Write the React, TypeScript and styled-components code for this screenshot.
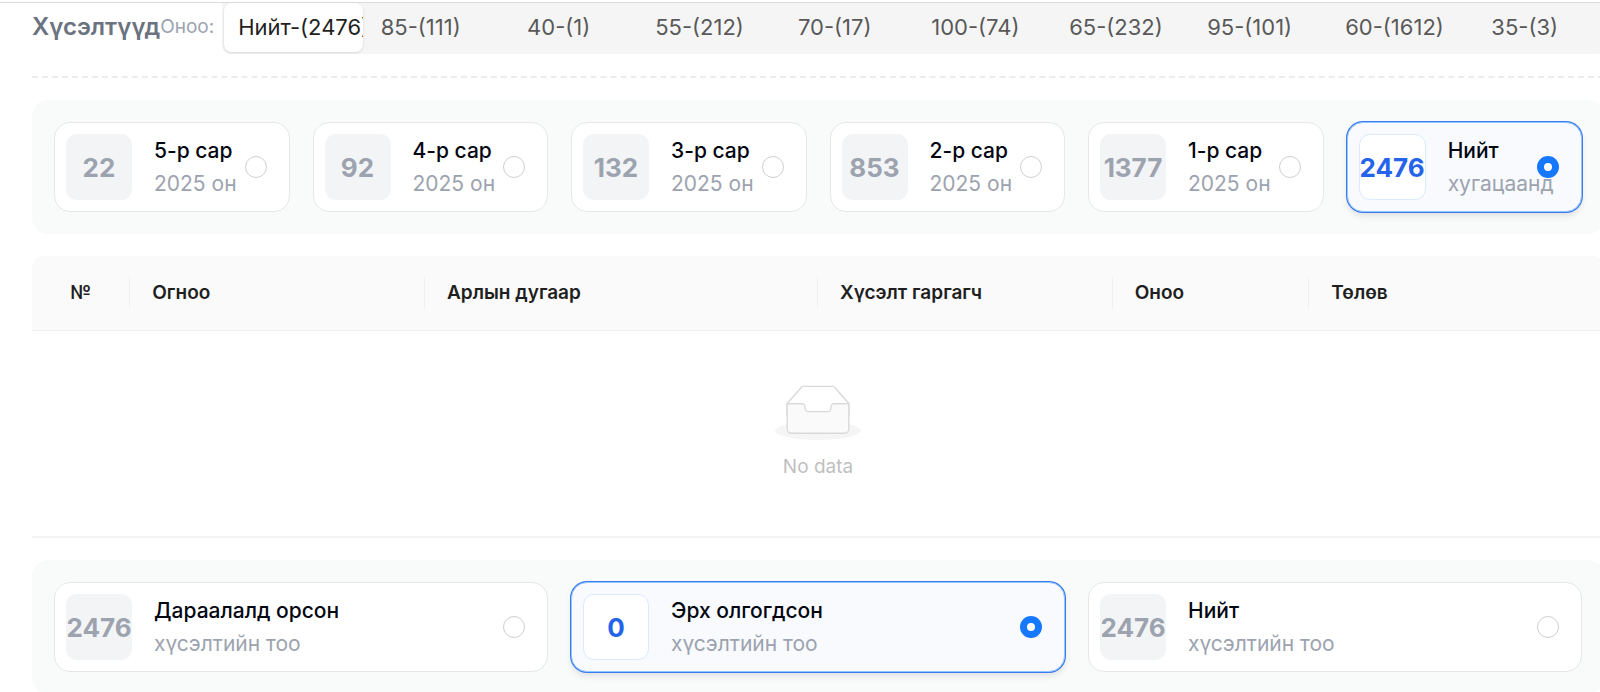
import React, { useState } from "react";
import styled, { createGlobalStyle, css } from "styled-components";

const GlobalStyle = createGlobalStyle`
  *, *::before, *::after { box-sizing: border-box; }
  body {
    margin: 0;
    background: #fff;
    overflow: hidden;
    font-family: Inter, "Liberation Sans", sans-serif;
    -webkit-font-smoothing: antialiased;
  }
`;

const Page = styled.main`
  border-top: 2px solid #fff;
`;

const Content = styled.div`
  border-top: 1px solid #d9dadc;
  padding-left: 32px;
  overflow: hidden;
`;

const Sheet = styled.div`
  display: flex;
  flex-direction: column;
  gap: 22px;
  margin-right: -4px;
`;

const Toolbar = styled.header`
  display: flex;
  align-items: flex-start;
  padding-bottom: 22px;
  border-bottom: 2px dashed #ececec;
`;

const Heading = styled.h1`
  margin: 0;
  font-size: 24px;
  line-height: 48px;
  font-weight: 600;
  color: #6b7280;
`;

const FilterLabel = styled.span`
  font-size: 19px;
  line-height: 48px;
  color: #9ca3af;
  white-space: nowrap;
`;

const Segmented = styled.div`
  flex: 1;
  min-width: 0;
  display: flex;
  height: 51px;
  margin-left: 8px;
  padding: 0 0 2px 2px;
  background: #f5f5f5;
  border-radius: 0 0 8px 8px;
  overflow: hidden;
`;

const Segment = styled.label<{ $active: boolean }>`
  flex: none;
  width: 115px;
  margin-right: 23px;
  padding: 0 16px;
  overflow: hidden;
  white-space: nowrap;
  text-align: center;
  font-size: 22px;
  line-height: 48px;
  color: #595959;
  cursor: pointer;
  ${(p) =>
    p.$active &&
    css`
      width: 139px;
      margin-right: 0;
      padding: 0 14px;
      color: #1f1f1f;
      background: #fff;
      border-radius: 8px;
      box-shadow: 0 1px 3px rgba(0, 0, 0, 0.12);
    `}
`;

const HiddenRadio = styled.input`
  position: absolute;
  opacity: 0;
  pointer-events: none;
`;

const Panel = styled.section<{ $columns: number }>`
  display: grid;
  grid-template-columns: repeat(${(p) => p.$columns}, minmax(0, 1fr));
  gap: 23px;
  padding: 22px;
  border-radius: 16px;
  background: #f9fafa;
`;

const Card = styled.label<{ $selected: boolean }>`
  display: flex;
  align-items: center;
  height: 90px;
  padding: 0 22px 0 11px;
  border: 1px solid #e5e7eb;
  border-radius: 16px;
  background: #fff;
  cursor: pointer;
  ${(p) =>
    p.$selected &&
    css`
      border-color: #93c5fd;
      background: #f8fafe;
      box-shadow: 0 0 0 1px #3b7cf0, 0 4px 6px rgba(0, 0, 0, 0.1);
    `}
`;

const Count = styled.span<{ $selected: boolean }>`
  flex: none;
  display: flex;
  align-items: center;
  justify-content: center;
  min-width: 66px;
  height: 66px;
  border-radius: 11px;
  font-size: 26px;
  font-weight: 700;
  color: ${(p) => (p.$selected ? "#2563eb" : "#9ca3af")};
  background: ${(p) => (p.$selected ? "#fff" : "#f3f4f6")};
  border: ${(p) => (p.$selected ? "1px solid #dbeafe" : "none")};
`;

const CardText = styled.span`
  flex: 1;
  min-width: 0;
  margin-left: 22px;
  font-size: 21px;
  line-height: 33px;
  white-space: nowrap;
`;

const CardTitle = styled.span`
  display: block;
  font-weight: 500;
  color: #030712;
`;

const CardSubtitle = styled.span`
  display: block;
  color: #9ca3af;
`;

const Radio = styled.input`
  appearance: none;
  flex: none;
  width: 22px;
  height: 22px;
  margin: 0;
  border: 1px solid #d0d0d0;
  border-radius: 50%;
  background: #fff;
  &:checked {
    border: 7px solid #1677ff;
  }
`;

const Table = styled.table`
  width: 100%;
  table-layout: fixed;
  border-collapse: separate;
  border-spacing: 0;
`;

const HeadCell = styled.th<{ $units: number; $first?: boolean; $last?: boolean }>`
  width: calc(100% * ${(p) => p.$units} / 16);
  height: 75px;
  padding: 0;
  background: #fafafa;
  border-bottom: 1px solid #f0f0f0;
  border-top-left-radius: ${(p) => (p.$first ? 11 : 0)}px;
  border-top-right-radius: ${(p) => (p.$last ? 11 : 0)}px;
  font-size: 19px;
  line-height: 32px;
  font-weight: 600;
  color: #1f1f1f;
  text-align: ${(p) => (p.$first ? "center" : "left")};
`;

const HeadLabel = styled.div<{ $first?: boolean; $last?: boolean }>`
  padding-left: ${(p) => (p.$first ? 0 : 22)}px;
  border-right: ${(p) => (p.$last ? "none" : "1px solid #f0f0f0")};
`;

const EmptyCell = styled.td`
  height: 207px;
  padding: 0;
  border-bottom: 2px solid #f3f3f3;
  text-align: center;
  vertical-align: middle;
  font-size: 19px;
  line-height: 30px;
  color: #bfbfbf;
`;

const EmptyArt = styled.svg`
  display: block;
  margin: 0 auto 12px;
`;

const scores = [
  "Нийт-(2476)",
  "85-(111)",
  "40-(1)",
  "55-(212)",
  "70-(17)",
  "100-(74)",
  "65-(232)",
  "95-(101)",
  "60-(1612)",
  "35-(3)",
];

interface Option {
  count: number;
  title: string;
  subtitle: string;
}

const months: Option[] = [
  { count: 22, title: "5-р сар", subtitle: "2025 он" },
  { count: 92, title: "4-р сар", subtitle: "2025 он" },
  { count: 132, title: "3-р сар", subtitle: "2025 он" },
  { count: 853, title: "2-р сар", subtitle: "2025 он" },
  { count: 1377, title: "1-р сар", subtitle: "2025 он" },
  { count: 2476, title: "Нийт", subtitle: "хугацаанд" },
];

const statuses: Option[] = [
  { count: 2476, title: "Дараалалд орсон", subtitle: "хүсэлтийн тоо" },
  { count: 0, title: "Эрх олгогдсон", subtitle: "хүсэлтийн тоо" },
  { count: 2476, title: "Нийт", subtitle: "хүсэлтийн тоо" },
];

const columns = [
  { title: "№", units: 1 },
  { title: "Огноо", units: 3 },
  { title: "Арлын дугаар", units: 4 },
  { title: "Хүсэлт гаргагч", units: 3 },
  { title: "Оноо", units: 2 },
  { title: "Төлөв", units: 3 },
];

function OptionPanel({ name, options, initial }: { name: string; options: Option[]; initial: number }) {
  const [selected, setSelected] = useState(initial);
  return (
    <Panel $columns={options.length}>
      {options.map((o, i) => (
        <Card key={o.title} $selected={i === selected}>
          <Count $selected={i === selected}>{o.count}</Count>
          <CardText>
            <CardTitle>{o.title}</CardTitle>
            <CardSubtitle>{o.subtitle}</CardSubtitle>
          </CardText>
          <Radio type="radio" name={name} checked={i === selected} onChange={() => setSelected(i)} />
        </Card>
      ))}
    </Panel>
  );
}

function EmptyIcon() {
  return (
    <EmptyArt width="86" height="55" viewBox="0 0 64 41" aria-hidden="true">
      <g transform="translate(0 1)" fill="none" fillRule="evenodd">
        <ellipse fill="#f5f5f5" cx="32" cy="33" rx="32" ry="7" />
        <g fillRule="nonzero" stroke="#d9d9d9">
          <path
            fill="#fff"
            d="M55 12.76L44.854 1.258C44.367.474 43.656 0 42.907 0H21.093c-.749 0-1.46.474-1.947 1.257L9 12.761V22h46v-9.24z"
          />
          <path
            fill="#fafafa"
            d="M41.613 15.931c0-1.605.994-2.93 2.227-2.931H55v18.137C55 33.26 53.68 35 52.05 35h-40.1C10.32 35 9 33.259 9 31.137V13h11.16c1.233 0 2.227 1.323 2.227 2.928v.022c0 1.605 1.005 2.901 2.237 2.901h14.752c1.232 0 2.237-1.308 2.237-2.913v-.007z"
          />
        </g>
      </g>
    </EmptyArt>
  );
}

export default function App() {
  const [score, setScore] = useState(0);
  const last = columns.length - 1;
  return (
    <Page>
      <GlobalStyle />
      <Content>
        <Sheet>
          <Toolbar>
            <Heading>Хүсэлтүүд</Heading>
            <FilterLabel>Оноо:</FilterLabel>
            <Segmented role="radiogroup" aria-label="Оноо">
              {scores.map((s, i) => (
                <Segment key={s} $active={i === score}>
                  <HiddenRadio type="radio" name="score" checked={i === score} onChange={() => setScore(i)} />
                  {s}
                </Segment>
              ))}
            </Segmented>
          </Toolbar>
          <OptionPanel name="month" options={months} initial={5} />
          <Table>
            <thead>
              <tr>
                {columns.map((c, i) => (
                  <HeadCell key={c.title} $units={c.units} $first={i === 0} $last={i === last}>
                    <HeadLabel $first={i === 0} $last={i === last}>
                      {c.title}
                    </HeadLabel>
                  </HeadCell>
                ))}
              </tr>
            </thead>
            <tbody>
              <tr>
                <EmptyCell colSpan={columns.length}>
                  <EmptyIcon />
                  No data
                </EmptyCell>
              </tr>
            </tbody>
          </Table>
          <OptionPanel name="status" options={statuses} initial={1} />
        </Sheet>
      </Content>
    </Page>
  );
}
